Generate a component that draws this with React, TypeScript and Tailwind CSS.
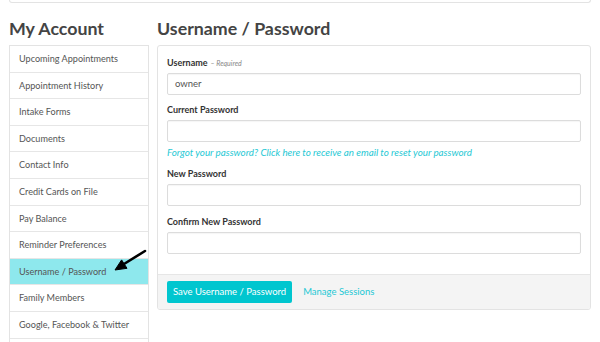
import React from "react";

const items = [
  "Upcoming Appointments",
  "Appointment History",
  "Intake Forms",
  "Documents",
  "Contact Info",
  "Credit Cards on File",
  "Pay Balance",
  "Reminder Preferences",
  "Username / Password",
  "Family Members",
  "Google, Facebook & Twitter",
  "",
];

function Field({ label, value, extra }: { label: string; value?: string; extra?: React.ReactNode }) {
  return (
    <div>
      <div className="h-[20px] flex items-center text-[9px] font-bold text-[#333]">
        {label}
        {extra}
      </div>
      <div className="h-[22px] border border-[#dcdcdc] rounded-[2px] bg-white flex items-center px-[7px] text-[9.5px] text-[#555] shadow-[inset_0_1px_1px_rgba(0,0,0,0.04)]">
        {value}
      </div>
    </div>
  );
}

export default function App() {
  return (
    <div className="w-[600px] h-[342px] overflow-hidden bg-white px-[9px]" style={{ fontFamily: "Lato, 'Open Sans', sans-serif" }}>
      <div className="h-[3px] border-x border-b border-[#e3e3e3] rounded-b-[3px]" />
      <div className="flex gap-[8px]">
        <div className="w-[140px] shrink-0">
          <h1 className="h-[42px] pt-[14px] text-[17.8px] font-bold leading-[22px] text-[#444]">My Account</h1>
          <div className="border border-[#e3e3e3] relative">
            {items.map((it, i) => (
              <div
                key={i}
                className={
                  "h-[26.6px] flex items-center pl-[9px] text-[9.1px] text-[#555] border-b border-[#e6e6e6] " +
                  (it === "Username / Password" ? "bg-[#8ee8ed]" : "bg-white")
                }
              >
                {it}
              </div>
            ))}
            <svg className="absolute left-[102px] top-[202px]" width="36" height="25" viewBox="0 0 36 25">
              <path d="M12 16 L33 3" stroke="#000" strokeWidth="2.6" strokeLinecap="round" fill="none" />
              <path d="M3 22 L9.6 11.9 L15 20.3 Z" fill="#000" stroke="#000" strokeWidth="1" strokeLinejoin="round" />
            </svg>
          </div>
        </div>
        <div className="flex-1">
          <h1 className="h-[42px] pt-[14px] text-[17.8px] font-bold leading-[22px] text-[#444]">Username / Password</h1>
          <div className="border border-[#e3e3e3] rounded-[3px] overflow-hidden">
            <div className="px-[9px] pt-[7px] pb-[20px] flex flex-col">
              <Field
                label="Username"
                value="owner"
                extra={<span className="ml-[3px] text-[7px] italic font-normal text-[#888]">– Required</span>}
              />
              <div className="mt-[5px]">
                <Field label="Current Password" />
              </div>
              <div className="h-[20px] flex items-center text-[9.8px] italic text-[#1ec8d4]">
                Forgot your password? Click here to receive an email to reset your password
              </div>
              <div className="mt-[2px]">
                <Field label="New Password" />
              </div>
              <div className="mt-[6px]">
                <Field label="Confirm New Password" />
              </div>
            </div>
            <div className="bg-[#f4f4f4] border-t border-[#e6e6e6] h-[35px] px-[9px] flex items-center gap-[11px]">
              <div className="h-[22px] px-[6px] rounded-[2px] bg-[#00c6cf] text-white text-[9.5px] flex items-center">
                Save Username / Password
              </div>
              <div className="text-[9.5px] text-[#1ec8d4]">Manage Sessions</div>
            </div>
          </div>
        </div>
      </div>
    </div>
  );
}
